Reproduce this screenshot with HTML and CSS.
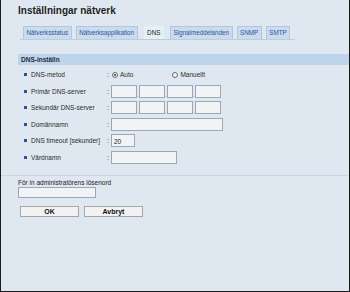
FILE: index.html
```html
<!DOCTYPE html>
<html lang="sv">
<head>
<meta charset="utf-8">
<title>Inställningar nätverk</title>
<link rel="stylesheet" href="styles.css">
</head>
<body>
<div class="frame">
  <h1 class="title">Inställningar nätverk</h1>
  <div class="tabs">
    <span class="tab">Nätverksstatus</span>
    <span class="tab">Nätverksapplikation</span>
    <span class="tab active">DNS</span>
    <span class="tab">Signalmeddelanden</span>
    <span class="tab">SNMP</span>
    <span class="tab">SMTP</span>
  </div>
  <div class="section-bar">DNS-inställn</div>
  <div class="form">
    <div class="label">DNS-metod</div><div class="colon">:</div>
    <div class="field radios">
      <span class="radio-item"><span class="radio checked"></span>Auto</span>
      <span class="radio-item second"><span class="radio"></span>Manuellt</span>
    </div>

    <div class="label">Primär DNS-server</div><div class="colon">:</div>
    <div class="field ip">
      <span class="box ipbox"></span><span class="dot">.</span><span class="box ipbox"></span><span class="dot">.</span><span class="box ipbox"></span><span class="dot">.</span><span class="box ipbox"></span>
    </div>

    <div class="label">Sekundär DNS-server</div><div class="colon">:</div>
    <div class="field ip">
      <span class="box ipbox"></span><span class="dot">.</span><span class="box ipbox"></span><span class="dot">.</span><span class="box ipbox"></span><span class="dot">.</span><span class="box ipbox"></span>
    </div>

    <div class="label">Domännamn</div><div class="colon">:</div>
    <div class="field"><span class="box domain"></span></div>

    <div class="label">DNS timeout [sekunder]</div><div class="colon">:</div>
    <div class="field"><span class="box timeout">20</span></div>

    <div class="label">Värdnamn</div><div class="colon">:</div>
    <div class="field"><span class="box host"></span></div>
  </div>
  <div class="sep"></div>
  <div class="admin">
    <div class="admin-label">För in administratörens lösenord</div>
    <span class="box password"></span>
    <div class="buttons">
      <span class="btn">OK</span>
      <span class="btn">Avbryt</span>
    </div>
  </div>
</div>
</body>
</html>
```
FILE: styles.css
```css
html, body {
  margin: 0;
  padding: 0;
}
body {
  font-family: "Liberation Sans", Arial, sans-serif;
  background: #dfe8f1;
}
.frame {
  box-sizing: border-box;
  width: 350px;
  height: 292px;
  border-left: 1px solid #1a1a1a;
  border-right: 1px solid #1a1a1a;
  border-bottom: 1px solid #1a1a1a;
  background: #dfe8f1;
  overflow: hidden;
}
.title {
  margin: 5px 0 0 17px;
  font-size: 10px;
  line-height: 12px;
  font-weight: bold;
  color: #1f1f1f;
}
.tabs {
  display: flex;
  gap: 4px;
  margin: 9px 54px 0 19px;
  padding-left: 3px;
  border-bottom: 1px solid #c2ccd6;
  height: 13px;
}
.tab {
  box-sizing: border-box;
  height: 13px;
  padding: 0 2.5px;
  border: 1px solid #b5c6d8;
  border-bottom: none;
  background: #c9dbee;
  color: #3550a0;
  font-size: 6.3px;
  line-height: 12px;
  white-space: nowrap;
}
.tab.active {
  background: #e6eef6;
  border-color: #e6eef6;
  color: #1f1f1f;
  margin: 0 2px;
}
.section-bar {
  margin: 14px 0 0 17px;
  height: 11px;
  padding-left: 3px;
  background: #bdd4eb;
  color: #1f2a3a;
  font-size: 6.5px;
  font-weight: bold;
  line-height: 11px;
}
.form {
  display: grid;
  grid-template-columns: 83px 4px 1fr;
  grid-auto-rows: 13px;
  row-gap: 3.5px;
  margin: 3px 0 0 23px;
  font-size: 6.5px;
  color: #2a2a2a;
}
.label {
  display: flex;
  align-items: center;
  gap: 4px;
  white-space: nowrap;
}
.label::before {
  content: "";
  width: 3px;
  height: 3px;
  background: #34508a;
}
.colon {
  display: flex;
  align-items: center;
}
.field {
  display: flex;
  align-items: center;
}
.radios {
  gap: 0;
}
.radio-item {
  display: inline-flex;
  align-items: center;
  gap: 2px;
  margin-left: 1px;
}
.radio-item.second {
  margin-left: 39px;
}
.radio {
  box-sizing: border-box;
  width: 6px;
  height: 6px;
  border: 1px solid #6a6a6a;
  border-radius: 50%;
  background: #f5f5f5;
  display: inline-flex;
  align-items: center;
  justify-content: center;
}
.radio.checked::after {
  content: "";
  width: 2px;
  height: 2px;
  border-radius: 50%;
  background: #333;
}
.box {
  box-sizing: border-box;
  display: inline-block;
  height: 13px;
  border: 1px solid #9ca8b4;
  background: #f1f4f7;
  font-size: 6.5px;
  line-height: 13px;
  padding-left: 2px;
  color: #222;
}
.ip .box {
  width: 26px;
}
.dot {
  width: 2px;
  align-self: flex-end;
  font-size: 5px;
  line-height: 5px;
  text-align: center;
  color: #555;
}
.domain {
  width: 112px;
}
.timeout {
  width: 24px;
  line-height: 14px;
}
.host {
  width: 66px;
}
.sep {
  margin-top: 11px;
  height: 1px;
  background: #c8d6e4;
}
.admin {
  padding: 3px 0 0 17px;
  font-size: 6.5px;
  color: #222;
}
.admin-label {
  line-height: 8px;
}
.password {
  width: 78px;
  height: 11px;
  margin-top: 0;
}
.buttons {
  display: flex;
  gap: 5px;
  margin: 7px 0 0 2px;
}
.btn {
  box-sizing: border-box;
  width: 59px;
  height: 11px;
  border: 1px solid #a6a6a6;
  background: #f2f2f2;
  text-align: center;
  font-weight: bold;
  font-size: 7px;
  line-height: 9px;
  color: #111;
}
```
